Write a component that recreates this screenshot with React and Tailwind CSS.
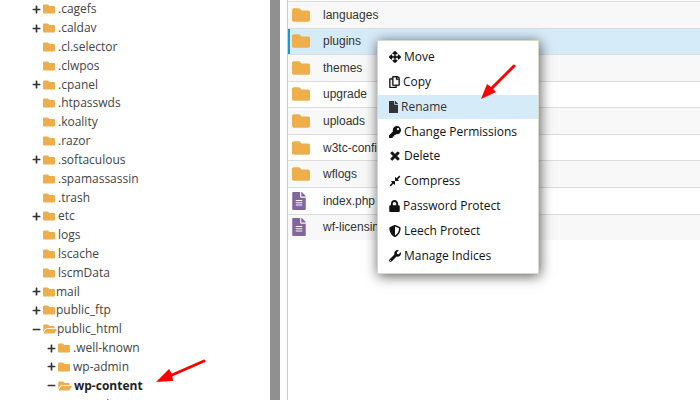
import {
    FaArrowsAlt, FaCompressAlt, FaFile, FaFileAlt, FaFolder, FaFolderOpen, FaKey, FaLock, FaMinus, FaPlus, FaRegCopy, FaShieldAlt, FaTimes, FaWrench
} from 'react-icons/fa';

const tree = [
    { name: '.cagefs', toggle: 'plus' },
    { name: '.caldav', toggle: 'plus' },
    { name: '.cl.selector' },
    { name: '.clwpos' },
    { name: '.cpanel', toggle: 'plus' },
    { name: '.htpasswds' },
    { name: '.koality' },
    { name: '.razor' },
    { name: '.softaculous', toggle: 'plus' },
    { name: '.spamassassin' },
    { name: '.trash' },
    { name: 'etc', toggle: 'plus' },
    { name: 'logs' },
    { name: 'lscache' },
    { name: 'lscmData' },
    { name: 'mail', toggle: 'plus', special: true },
    { name: 'public_ftp', toggle: 'plus', special: true },
    { name: 'public_html', toggle: 'minus', special: true },
    { name: '.well-known', toggle: 'plus', level: 1 },
    { name: 'wp-admin', toggle: 'plus', level: 1 },
    { name: 'wp-content', toggle: 'minus', level: 1, current: true },
    { name: 'cache', toggle: 'plus', level: 2 },
];

const indents = ['pl-8', 'pl-[47px]', 'pl-[62px]'];

const files = [
    { name: 'languages', type: 'dir' },
    { name: 'plugins', type: 'dir', selected: true },
    { name: 'themes', type: 'dir' },
    { name: 'upgrade', type: 'dir' },
    { name: 'uploads', type: 'dir' },
    { name: 'w3tc-config', type: 'dir' },
    { name: 'wflogs', type: 'dir' },
    { name: 'index.php', type: 'file' },
    { name: 'wf-licensing.php', type: 'file' },
];

const actions = [
    { label: 'Move', icon: FaArrowsAlt, size: 'w-3 stroke-[16px]' },
    { label: 'Copy', icon: FaRegCopy, size: 'w-[11px] stroke-[12px]' },
    { label: 'Rename', icon: FaFile, size: 'w-[9px]', active: true },
    { label: 'Change Permissions', icon: FaKey, size: 'w-3' },
    { label: 'Delete', icon: FaTimes, size: 'w-3 stroke-[36px]' },
    { label: 'Compress', icon: FaCompressAlt, size: 'w-3' },
    { label: 'Password Protect', icon: FaLock, size: 'w-[11px]' },
    { label: 'Leech Protect', icon: FaShieldAlt, size: 'w-3' },
    { label: 'Manage Indices', icon: FaWrench, size: 'w-3' },
];

function TreeItem({ item }) {
    const open = item.toggle === 'minus';
    const Folder = open ? FaFolderOpen : FaFolder;
    const Toggle = open ? FaMinus : FaPlus;
    const gap = item.special ? (open ? 'gap-0' : 'gap-px') : (open ? 'gap-0.5' : 'gap-[3px]');

    return (
        <li className={`flex items-center ${indents[item.level || 0]}`}>
            <button type="button" aria-label={`Toggle ${item.name}`} className={`w-[11px] shrink-0 text-[#333] ${item.toggle ? '' : 'invisible'}`}>
                <Toggle className="h-[9px] w-[9px]" />
            </button>
            <a href="#" className={`flex items-center whitespace-nowrap ${gap} ${item.current ? 'font-bold text-[#222]' : ''}`}>
                <Folder className={`shrink-0 text-[#eeae4b] ${open ? 'h-3 w-3.5' : 'h-3 w-3'}`} />
                {item.name}
            </a>
        </li>
    );
}

function FileRow({ file }) {
    return (
        <tr className={`border-t border-[#ddd] ${file.selected ? 'bg-[#d6ebf8]' : 'odd:bg-[#f8f8f8]'}`}>
            <td className={`w-[35px] p-0 pl-1 ${file.selected ? 'shadow-[inset_2px_0_#2196d6]' : ''}`}>
                {file.type === 'dir'
                    ? <FaFolder className="h-[18px] w-[18px] text-[#eeae4b]" />
                    : <FaFileAlt className="h-[18px] w-3.5 text-[#8264a0]" />}
            </td>
            <td className="p-0">{file.name}</td>
        </tr>
    );
}

function ContextMenu() {
    return (
        <div role="menu" className="absolute top-10 left-[89px] w-[162px] border border-[#d9d6cc] bg-white pt-1 pb-[5px] font-['Open_Sans',sans-serif] text-[12px] text-[#111] shadow-[1px_2px_12px_rgba(0,0,0,0.65)]">
            <div className="grid h-[223px] auto-rows-fr">
                {actions.map(({ label, icon: Icon, size, active }) => (
                    <button
                        key={label}
                        type="button"
                        role="menuitem"
                        className={`flex w-full items-center gap-[3px] pl-[11px] whitespace-nowrap ${active ? 'bg-[#d6ebf8] text-[#333]' : ''}`}
                    >
                        <Icon className={`h-3 shrink-0 ${size}`} />
                        {label}
                    </button>
                ))}
            </div>
        </div>
    );
}

// Callout arrow pointing down and to the left
function Arrow({ className, line, head, viewBox }) {
    return (
        <svg className={className} viewBox={viewBox} aria-hidden="true">
            <path d={line} stroke="#f00" strokeWidth="3" strokeLinecap="round" />
            <path d={head} fill="#f00" />
        </svg>
    );
}

export default function App() {
    return (
        <div className="flex h-screen overflow-hidden bg-white">
            <nav className="relative w-[270px] shrink-0 overflow-hidden font-['Open_Sans',sans-serif] text-[12px] leading-[18px] text-[#444]">
                <ul className="grid h-[414px] auto-rows-fr">
                    {tree.map((item) => <TreeItem key={item.name} item={item} />)}
                </ul>
                <Arrow
                    className="absolute top-[356px] left-[155px] h-8 w-[54px]"
                    viewBox="0 0 54 32"
                    line="M49 5L17 19"
                    head="M1 26L14 13L17 18L18 25Z"
                />
            </nav>
            <div className="w-2.5 shrink-0 bg-[#909090]" />
            <main className="relative ml-[7px] flex-1 border-l border-[#ccc]">
                <table className="mt-px h-[239px] w-full border-collapse font-['Liberation_Sans',sans-serif] text-[12px] leading-4 text-[#333]">
                    <tbody>
                        {files.map((file) => <FileRow key={file.name} file={file} />)}
                    </tbody>
                </table>
                <ContextMenu />
                <Arrow
                    className="absolute top-[60px] left-[188px] h-[44px] w-[44px]"
                    viewBox="0 0 44 44"
                    line="M38 6L16 28"
                    head="M5 39L11 24L15 27L20 32Z"
                />
            </main>
        </div>
    );
}
